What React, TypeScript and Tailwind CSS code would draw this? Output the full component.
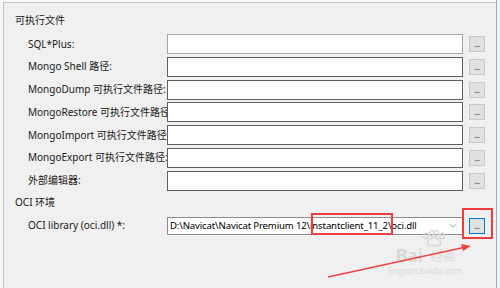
import { ChevronDown } from 'lucide-react';

const rows = [
  { label: 'SQL*Plus:', light: true },
  { label: 'Mongo Shell 路径:' },
  { label: 'MongoDump 可执行文件路径:' },
  { label: 'MongoRestore 可执行文件路径:' },
  { label: 'MongoImport 可执行文件路径:' },
  { label: 'MongoExport 可执行文件路径:' },
  { label: '外部编辑器:' },
];

const DotsButton = ({ focused = false }: { focused?: boolean }) => (
  <button
    className={`w-[16px] h-[16px] flex items-end justify-center pb-[3px] bg-[#e1e1e1] border ${
      focused ? 'border-[#0078d7]' : 'border-[#c9c9c9]'
    }`}
  >
    <span className="text-[8px] leading-none text-[#333] tracking-[-0.5px]">...</span>
  </button>
);

export default function App() {
  return (
    <div className="relative w-[500px] h-[288px] overflow-hidden bg-[#f7f7f7] flex font-['Noto_Sans','Noto_Sans_CJK_SC',sans-serif] text-[10px] text-[#1a1a1a]">
      {/* Options panel */}
      <div className="ml-[3px] mt-[2px] flex-1 bg-[#f0f0f0] border-l border-t border-[#c3c3c3] pt-[7px]">
        <div className="h-[20px] flex items-center pl-[11px]">可执行文件</div>

        <div className="mt-[4px] flex flex-col gap-y-[2.8px]">
          {rows.map((row) => (
            <div key={row.label} className="h-[20px] flex items-center">
              <div className="w-[163px] pl-[24px] whitespace-nowrap">{row.label}</div>
              <div
                className={`w-[296px] h-[20px] bg-white border ${
                  row.light ? 'border-[#a6a6a6]' : 'border-[#5f5f5f]'
                }`}
              />
              <div className="ml-[6px]">
                <DotsButton />
              </div>
            </div>
          ))}
        </div>

        <div className="mt-[2px] h-[20px] flex items-center pl-[11px]">OCI 环境</div>

        <div className="mt-[4px] h-[18px] flex items-center">
          <div className="w-[163px] pl-[24px] whitespace-nowrap">OCI library (oci.dll) *:</div>
          <div className="w-[296px] h-[18px] bg-white border border-[#8c8c8c] flex items-center pl-[2px] pr-[4px]">
            <span className="flex-1 whitespace-nowrap text-black text-[9.6px] tracking-[-0.15px]">
              D:\Navicat\Navicat Premium 12\instantclient_11_2\oci.dll
            </span>
            <ChevronDown className="w-[10px] h-[10px] text-[#555]" strokeWidth={1.5} />
          </div>
          <div className="ml-[6px]">
            <DotsButton focused />
          </div>
        </div>
      </div>

      {/* Window edge */}
      <div className="w-[4px] border-l border-[#8ab4dc] bg-[#f4f4f4]" />

      {/* Annotations */}
      <div className="absolute left-[311px] top-[213px] w-[82px] h-[22px] border-2 border-[#ee3b3b]" />
      <div className="absolute left-[462px] top-[208px] w-[31px] h-[31px] border-2 border-[#ee3b3b]" />

      {/* Watermark */}
      <div className="absolute left-[382px] top-[230px] w-[86px] flex flex-col items-center text-[#dadada] pointer-events-none">
        <svg width="26" height="17" viewBox="0 0 26 17" className="ml-[18px]">
          <g fill="none" stroke="#d4d4d4" strokeWidth="1.3">
            <ellipse cx="5" cy="6" rx="2.2" ry="2.8" />
            <ellipse cx="10.5" cy="3.2" rx="2.2" ry="2.8" />
            <ellipse cx="15.5" cy="3.2" rx="2.2" ry="2.8" />
            <ellipse cx="21" cy="6" rx="2.2" ry="2.8" />
            <path d="M9 15.5c-3.5 0-3.5-4.5 0-6.5 2.5-2.2 5.5-2.2 8 0 3.5 2 3.5 6.5 0 6.5z" />
          </g>
        </svg>
        <div className="flex items-end gap-[8px] leading-none -mt-[1px]">
          <span className="text-[18px] font-bold tracking-[-0.3px]">Bai</span>
          <span className="text-[12px] mb-[1px]">经验</span>
        </div>
        <div className="text-[8.5px] leading-none mt-[3px]">jingyan.baidu.com</div>
      </div>

      <svg className="absolute left-0 top-0 pointer-events-none" width="500" height="288">
        <line x1="328" y1="277" x2="466" y2="247" stroke="#ee4444" strokeWidth="1.6" />
        <polygon points="471,246 461,244 463,251" fill="#ee4444" />
      </svg>
    </div>
  );
}
